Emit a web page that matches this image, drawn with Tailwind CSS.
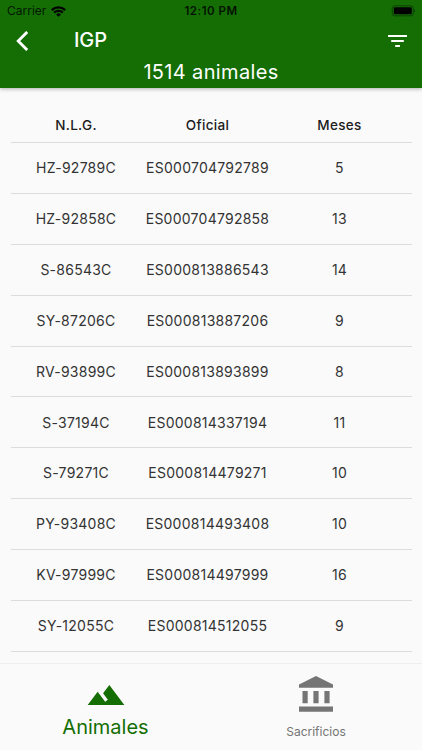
<!DOCTYPE html>
<html lang="es">
<head>
  <meta charset="UTF-8" />
  <meta name="viewport" content="width=device-width, initial-scale=1.0" />
  <title>IGP | Animales</title>
  <script src="https://cdn.jsdelivr.net/npm/@tailwindcss/browser@4"></script>
</head>
<body class="bg-[#fafafa] font-['Inter',sans-serif]">
  <div class="w-[422px] h-[750px] flex flex-col overflow-hidden">

    <!-- App Bar -->
    <header class="relative z-10 h-[88px] shrink-0 bg-[#146e04] shadow-[0_1px_4px_rgba(0,0,0,0.3)]">
      <div class="h-[22px] grid grid-cols-3 items-center pl-[7px] pr-[7px] text-black">
        <div class="flex items-center gap-[5px]">
          <span class="text-[12px] leading-[22px] text-black/80">Carrier</span>
          <svg class="w-[15px] h-[11px]" viewBox="0 0 15 11" fill="none" stroke="currentColor" stroke-width="2.2">
            <path d="M0.8 4.1a9.6 9.6 0 0 1 13.4 0M3.2 6.6a6.1 6.1 0 0 1 8.6 0" />
            <path d="M7.5 10.8L5.1 8.4a3.4 3.4 0 0 1 4.8 0z" fill="currentColor" stroke="none" />
          </svg>
        </div>
        <span class="text-center text-[11.5px] leading-[22px] font-semibold tracking-[0.5px] text-black/85">12:10 PM</span>
        <svg class="justify-self-end w-[25px] h-[12px]" viewBox="0 0 25 12">
          <rect x="2.3" y="0.8" width="21" height="10" rx="2.6" fill="none" stroke="#000" stroke-opacity="0.4" />
          <rect x="3.8" y="2.3" width="18" height="7" rx="1.3" />
          <path d="M24.2 4.3v3q.8-.4.8-1.5t-.8-1.5z" fill-opacity="0.5" />
        </svg>
      </div>
      <div class="h-[38px] flex items-center pl-[16px] pr-[15px] text-white">
        <svg class="w-[13px] h-[20px]" viewBox="0 0 13 20" fill="none" stroke="currentColor" stroke-width="2.8">
          <path d="M11.2 0.9L2.2 10l9 9.1" />
        </svg>
        <h1 class="ml-[45px] mt-[-2px] text-[20px] leading-[24px] font-medium tracking-[-0.1px]">IGP</h1>
        <svg class="ml-auto w-[19px] h-[14px]" viewBox="0 0 19 14" fill="currentColor">
          <path d="M0 1h19v2H0zM3.2 6h12.6v2H3.2zM7.2 11h4.7v2H7.2z" />
        </svg>
      </div>
      <p class="text-center text-[20px] leading-[24px] tracking-[0.35px] text-white">1514 animales</p>
    </header>

    <!-- Animals Table -->
    <main class="flex-1 min-h-0 overflow-hidden px-[10.5px] pt-[19px] text-center">
      <div class="h-[36px] pt-px grid grid-cols-[131px_132px_132px] items-center border-b border-[#dcdcdc] text-[13.5px] font-medium tracking-[0.35px] text-[#1c1c1c]">
        <span>N.L.G.</span>
        <span>Oficial</span>
        <span>Meses</span>
      </div>
      <div id="rows"></div>
    </main>

    <!-- Bottom Navigation -->
    <nav class="h-[87px] shrink-0 grid grid-cols-2 border-t border-[#eeeeee]">
      <a href="#" class="flex flex-col items-center pt-[11px] text-[#146e04]">
        <svg class="w-10 h-10" viewBox="0 0 24 24" fill="currentColor">
          <path d="M14 6l-3.75 5 2.85 3.8-1.6 1.2C9.81 13.75 7 10 7 10l-6 8h22L14 6z" />
        </svg>
        <span class="text-[20px] leading-[24px]">Animales</span>
      </a>
      <a href="#" class="flex flex-col items-center pt-[11px] pr-px text-[#757575]">
        <svg class="w-10 h-10" viewBox="0 0 40 40" fill="currentColor">
          <path d="M20 1L37 9.5v3.2H3V9.5zM6.5 16h5.2v12.2H6.5zM17.4 16h5.2v12.2h-5.2zM28.4 16h5.2v12.2h-5.2zM3 31.5h34v5.3H3z" />
        </svg>
        <span class="mt-[9px] text-[12px] leading-[16px]">Sacrificios</span>
      </a>
    </nav>
  </div>

  <script>
    const animals = [
      ['HZ-92789C', 'ES000704792789', 5],
      ['HZ-92858C', 'ES000704792858', 13],
      ['S-86543C', 'ES000813886543', 14],
      ['SY-87206C', 'ES000813887206', 9],
      ['RV-93899C', 'ES000813893899', 8],
      ['S-37194C', 'ES000814337194', 11],
      ['S-79271C', 'ES000814479271', 10],
      ['PY-93408C', 'ES000814493408', 10],
      ['KV-97999C', 'ES000814497999', 16],
      ['SY-12055C', 'ES000814512055', 9],
    ];

    document.getElementById('rows').innerHTML = animals.map(([nlg, oficial, meses]) => `
      <div class="h-[50.9px] pb-[0.6px] grid grid-cols-[131px_132px_132px] items-center border-b border-[#dcdcdc] text-[14px] tracking-[0.25px] text-[#333333]">
        <span>${nlg}</span>
        <span>${oficial}</span>
        <span>${meses}</span>
      </div>
    `).join('');
  </script>
</body>
</html>
